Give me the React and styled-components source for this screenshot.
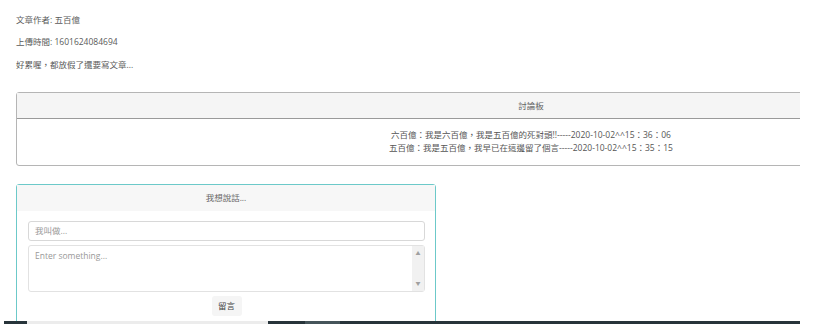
import React from "react";
import styled, { createGlobalStyle } from "styled-components";

const GlobalStyle = createGlobalStyle`
  html, body {
    margin: 0;
    padding: 0;
    background: #fff;
    overflow: hidden;
  }
  body {
    font-family: "Open Sans", "Noto Sans CJK TC", sans-serif;
    color: #555;
  }
`;

const Page = styled.div`
  width: 800px;
  height: 324px;
  overflow: hidden;
  padding: 13px 0 0 16px;
  box-sizing: border-box;
`;

const Meta = styled.p`
  margin: 0 0 ${(p) => p.gap || 9}px;
  font-size: 8.5px;
  line-height: 13px;
  color: #5a5a5a;
`;

const Board = styled.div`
  width: 1028px;
  margin-top: 21px;
  border: 1px solid #b5b5b5;
  border-radius: 3px;
  background: #fff;
`;

const BoardHeader = styled.div`
  height: 25px;
  line-height: 25px;
  background: #f5f5f5;
  border-bottom: 1px solid #9a9a9a;
  text-align: center;
  font-size: 8.5px;
  color: #666;
`;

const BoardBody = styled.div`
  height: 46px;
  padding-top: 9px;
  box-sizing: border-box;
  text-align: center;
`;

const Comment = styled.div`
  font-size: 8.5px;
  line-height: 13px;
  color: #555;
`;

const FormCard = styled.div`
  width: 418px;
  margin-top: 18px;
  border: 1px solid #6cc9c9;
  border-radius: 3px;
  background: #fff;
`;

const FormHeader = styled.div`
  height: 26px;
  line-height: 26px;
  background: #f7f7f7;
  text-align: center;
  font-size: 8.5px;
  color: #666;
`;

const FormBody = styled.div`
  padding: 10px 10px 20px 11px;
  display: flex;
  flex-direction: column;
  align-items: stretch;
  gap: 4px;
`;

const Input = styled.div`
  height: 20px;
  border: 1px solid #d8d8d8;
  border-radius: 3px;
  box-sizing: border-box;
  padding: 0 6px;
  line-height: 18px;
  font-size: 8.5px;
  color: #999;
`;

const TextArea = styled.div`
  height: 47px;
  border: 1px solid #e2e2e2;
  border-radius: 3px;
  box-sizing: border-box;
  display: flex;
  font-size: 8.5px;
  color: #999;
`;

const TextContent = styled.div`
  flex: 1;
  padding: 4px 6px;
  line-height: 12px;
`;

const ScrollTrack = styled.div`
  width: 12px;
  background: #f1f1f1;
  display: flex;
  flex-direction: column;
  justify-content: space-between;
  align-items: center;
  padding: 5px 0;
  box-sizing: border-box;
  font-size: 5px;
  color: #a0a0a0;
  line-height: 5px;
`;

const ButtonRow = styled.div`
  display: flex;
  justify-content: center;
`;

const Button = styled.div`
  width: 30px;
  height: 20px;
  line-height: 20px;
  text-align: center;
  background: #f5f5f5;
  border-radius: 3px;
  font-size: 8.5px;
  color: #444;
`;

const BottomBar = styled.div`
  position: fixed;
  left: 4px;
  bottom: 0;
  width: 796px;
  height: 3px;
  background: #27343a;
  display: flex;
`;

const BarPart = styled.div`
  margin-left: ${(p) => p.left}px;
  width: ${(p) => p.w}px;
  background: ${(p) => p.color};
`;

export default function App() {
  return (
    <>
      <GlobalStyle />
      <Page>
        <Meta>文章作者: 五百億</Meta>
        <Meta gap={10}>上傳時間: 1601624084694</Meta>
        <Meta>好累喔，都放假了還要寫文章...</Meta>

        <Board>
          <BoardHeader>討論板</BoardHeader>
          <BoardBody>
            <Comment>六百億：我是六百億，我是五百億的死對頭!!-----2020-10-02^^15：36：06</Comment>
            <Comment>五百億：我是五百億，我早已在這邊留了個言-----2020-10-02^^15：35：15</Comment>
          </BoardBody>
        </Board>

        <FormCard>
          <FormHeader>我想說話...</FormHeader>
          <FormBody>
            <Input>我叫做...</Input>
            <TextArea>
              <TextContent>Enter something...</TextContent>
              <ScrollTrack>
                <span>▲</span>
                <span>▼</span>
              </ScrollTrack>
            </TextArea>
            <ButtonRow>
              <Button>留言</Button>
            </ButtonRow>
          </FormBody>
        </FormCard>
      </Page>
      <BottomBar>
        <BarPart left={23} w={241} color="#ececec" />
        <BarPart left={37} w={35} color="#45545a" />
      </BottomBar>
    </>
  );
}
